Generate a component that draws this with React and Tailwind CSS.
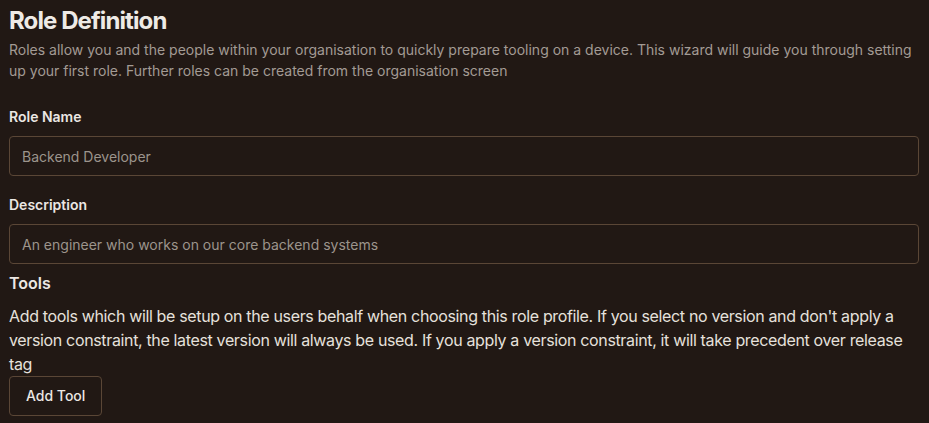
import React from 'react';

// Role definition step of the onboarding wizard
export default function App() {
  return (
    <div
      className="min-h-screen w-full bg-[#211814] pl-[9px] pr-[10px] pt-[5px] text-[#ebe7e3]"
      style={{ fontFamily: 'Inter, "Noto Sans", sans-serif' }}
    >
      <h1 className="text-2xl leading-8 font-bold tracking-[-0.9px] text-[#eeeae6]">Role Definition</h1>
      <p className="mt-[2px] text-sm leading-[21px] text-[#a39b94]">
        Roles allow you and the people within your organisation to quickly prepare tooling on a device. This wizard will
        guide you through setting up your first role. Further roles can be created from the organisation screen
      </p>

      <div className="mt-[26px]">
        <label className="block text-sm leading-5 font-semibold">Role Name</label>
        <input
          className="mt-[9px] block h-10 w-full rounded border border-[#5a4636] bg-transparent px-3 text-sm text-[#ebe7e3] placeholder-[#9c948c] outline-none"
          placeholder="Backend Developer"
        />
      </div>

      <div className="mt-[19px]">
        <label className="block text-sm leading-5 font-semibold">Description</label>
        <input
          className="mt-[9px] block h-10 w-full rounded border border-[#5a4636] bg-transparent px-3 text-sm text-[#ebe7e3] placeholder-[#9c948c] outline-none"
          placeholder="An engineer who works on our core backend systems"
        />
      </div>

      <div className="mt-[7px]">
        <h2 className="text-base leading-6 font-semibold">Tools</h2>
        <p className="mt-[9px] text-base leading-6 tracking-[-0.35px] text-[#e6e1dc]">
          Add tools which will be setup on the users behalf when choosing this role profile. If you select no version and
          don't apply a version constraint, the latest version will always be used. If you apply a version constraint, it
          will take precedent over release tag
        </p>
        <button className="block h-10 rounded border border-[#5a4636] px-4 text-sm font-medium text-[#ebe7e3]">
          Add Tool
        </button>
      </div>
    </div>
  );
}
